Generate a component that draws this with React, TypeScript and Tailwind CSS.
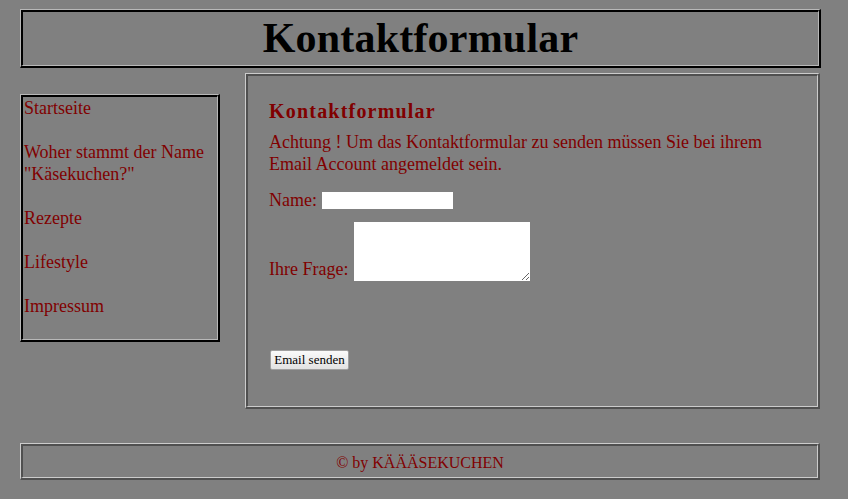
const NAV = ['Startseite', 'Woher stammt der Name "Käsekuchen?"', 'Rezepte', 'Lifestyle', 'Impressum'];

function Ridge({ dark, light, children, className }: { dark: string; light: string; children: React.ReactNode; className?: string }) {
  // old-school ridge: light outer edge on top/left, dark on bottom/right
  return (
    <div className={`${className ?? ''} border-t border-l border-r-2 border-b-2`} style={{ borderTopColor: light, borderLeftColor: light, borderRightColor: dark, borderBottomColor: dark }}>
      <div className="h-full border-t-2 border-l-2 border-r border-b" style={{ borderTopColor: dark, borderLeftColor: dark, borderRightColor: light, borderBottomColor: light }}>
        {children}
      </div>
    </div>
  );
}

export default function App() {
  return (
    <div className="min-h-[499px] bg-[#808080] px-[20px] pt-[9px] font-['Liberation_Serif',serif] text-[#800000]">
      <Ridge dark="#000000" light="#b8b8b8" className="h-[59px] w-[801px]">
        <h1 className="text-center text-[42px] font-bold leading-[52px] tracking-[0.2px] text-black">Kontaktformular</h1>
      </Ridge>

      <div className="mt-[5px] flex items-start gap-[25px]">
        <Ridge dark="#000000" light="#b8b8b8" className="mt-[21px] w-[200px]">
          <ul className="pb-[22px] pl-[1px] text-[18px] leading-[22px]">
            {NAV.map((item, i) => (
              <li key={item} className={i > 0 ? 'mt-[22px]' : ''}>
                <a className="cursor-pointer">{item === NAV[1] ? <>Woher stammt der Name<br />"Käsekuchen?"</> : item}</a>
              </li>
            ))}
          </ul>
        </Ridge>

        <Ridge dark="#505050" light="#cccccc" className="h-[336px] w-[575px]">
          <div className="pl-[21px] pr-[20px] pt-[23px]">
            <h2 className="text-[20px] font-bold leading-[24px] tracking-[1.2px]">Kontaktformular</h2>
            <p className="mt-[8px] text-[18px] leading-[22px]">
              Achtung ! Um das Kontaktformular zu senden müssen Sie bei ihrem Email Account angemeldet sein.
            </p>
            <div className="mt-[14px] flex items-center gap-[5px] text-[18px] leading-[22px]">
              <span>Name:</span>
              <input className="h-[17px] w-[131px] bg-white outline-none" />
            </div>
            <div className="mt-[11px] flex items-end gap-[6px] text-[18px] leading-[22px]">
              <span className="mb-[1px]">Ihre Frage:</span>
              <textarea className="h-[59px] w-[176px] bg-white outline-none" />
            </div>
            <button className="ml-[1px] mt-[69px] h-[20px] w-[79px] rounded-[2px] border border-[#a0a0a0] bg-gradient-to-b from-[#fafafa] to-[#e2e2e2] text-[13px] leading-[16px] text-black">
              Email senden
            </button>
          </div>
        </Ridge>
      </div>

      <Ridge dark="#505050" light="#cccccc" className="mt-[34px] h-[37px] w-[800px]">
        <p className="pt-[7px] text-center text-[16px] leading-[20px]">© by KÄÄÄSEKUCHEN</p>
      </Ridge>
    </div>
  );
}
